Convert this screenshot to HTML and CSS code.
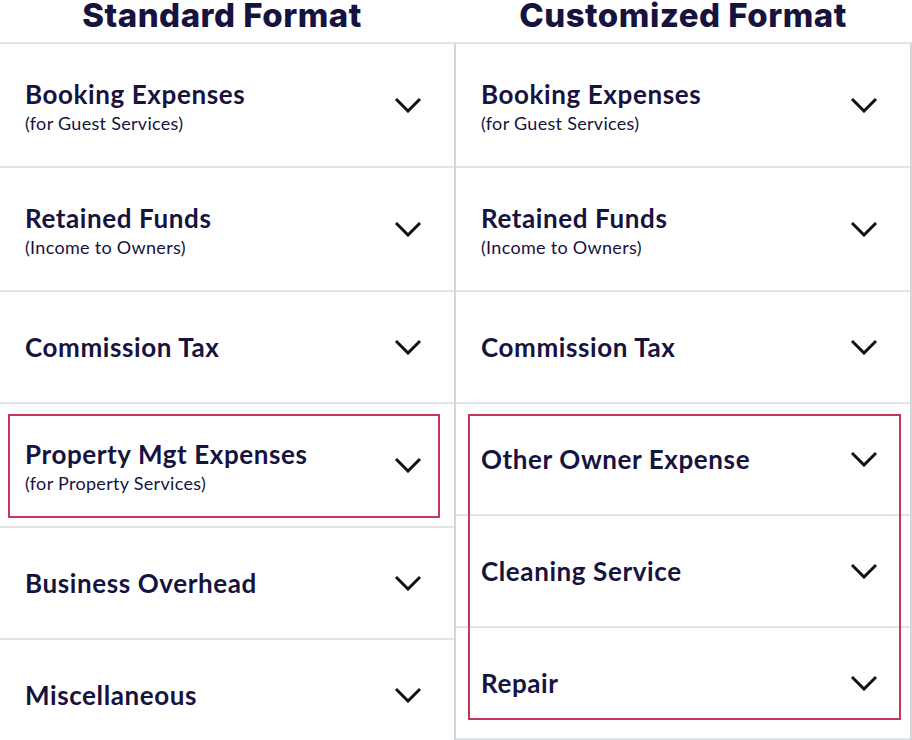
FILE: index.html
```html
<!DOCTYPE html>
<html lang="en">
<head>
<meta charset="utf-8">
<title>Standard vs Customized Format</title>
<link rel="stylesheet" href="styles.css">
</head>
<body>
<div class="board">
  <section class="col col-std">
    <h2 class="col-title">Standard Format</h2>
    <ul class="list">
      <li class="item tall"><div class="label"><span class="name">Booking Expenses</span><span class="sub">(for Guest Services)</span></div><svg class="chev" viewBox="0 0 28 16"><polyline points="2,2 14,14 26,2"/></svg></li>
      <li class="item tall"><div class="label"><span class="name">Retained Funds</span><span class="sub">(Income to Owners)</span></div><svg class="chev" viewBox="0 0 28 16"><polyline points="2,2 14,14 26,2"/></svg></li>
      <li class="item"><div class="label"><span class="name">Commission Tax</span></div><svg class="chev" viewBox="0 0 28 16"><polyline points="2,2 14,14 26,2"/></svg></li>
      <li class="item tall"><div class="label"><span class="name">Property Mgt Expenses</span><span class="sub">(for Property Services)</span></div><svg class="chev" viewBox="0 0 28 16"><polyline points="2,2 14,14 26,2"/></svg></li>
      <li class="item"><div class="label"><span class="name">Business Overhead</span></div><svg class="chev" viewBox="0 0 28 16"><polyline points="2,2 14,14 26,2"/></svg></li>
      <li class="item"><div class="label"><span class="name">Miscellaneous</span></div><svg class="chev" viewBox="0 0 28 16"><polyline points="2,2 14,14 26,2"/></svg></li>
    </ul>
  </section>
  <section class="col col-cus">
    <h2 class="col-title">Customized Format</h2>
    <ul class="list">
      <li class="item tall"><div class="label"><span class="name">Booking Expenses</span><span class="sub">(for Guest Services)</span></div><svg class="chev" viewBox="0 0 28 16"><polyline points="2,2 14,14 26,2"/></svg></li>
      <li class="item tall"><div class="label"><span class="name">Retained Funds</span><span class="sub">(Income to Owners)</span></div><svg class="chev" viewBox="0 0 28 16"><polyline points="2,2 14,14 26,2"/></svg></li>
      <li class="item"><div class="label"><span class="name">Commission Tax</span></div><svg class="chev" viewBox="0 0 28 16"><polyline points="2,2 14,14 26,2"/></svg></li>
      <li class="item"><div class="label"><span class="name">Other Owner Expense</span></div><svg class="chev" viewBox="0 0 28 16"><polyline points="2,2 14,14 26,2"/></svg></li>
      <li class="item"><div class="label"><span class="name">Cleaning Service</span></div><svg class="chev" viewBox="0 0 28 16"><polyline points="2,2 14,14 26,2"/></svg></li>
      <li class="item"><div class="label"><span class="name">Repair</span></div><svg class="chev" viewBox="0 0 28 16"><polyline points="2,2 14,14 26,2"/></svg></li>
    </ul>
  </section>
  <div class="mark mark-std"></div>
  <div class="mark mark-cus"></div>
</div>
</body>
</html>
```

FILE: styles.css
```css
html, body {
  margin: 0;
  padding: 0;
  background: #ffffff;
  overflow: hidden;
}

.board {
  position: relative;
  display: grid;
  grid-template-columns: 454px 458px;
  width: 912px;
  color: #17133f;
}

.col-title {
  height: 42px;
  margin: 0;
  text-align: center;
  font-family: "Inter", "Open Sans", sans-serif;
  font-weight: 800;
  font-size: 33px;
  line-height: 30px;
  letter-spacing: 0.5px;
  color: #17133f;
  box-sizing: border-box;
}

.col-std .col-title {
  padding-right: 10px;
}

.list {
  list-style: none;
  margin: 0;
  padding: 0;
  border-top: 2px solid #e1e5ea;
}

.col-cus .list {
  border-left: 2px solid #d3d6dc;
  border-right: 2px solid #d3d6dc;
}

.item {
  display: flex;
  align-items: center;
  justify-content: space-between;
  height: 110px;
  border-bottom: 2px solid #e1e5ea;
  padding: 0 32px 0 25px;
}

.item.tall {
  height: 122px;
}

.label {
  display: flex;
  flex-direction: column;
}

.tall .label {
  margin-top: 4px;
}

.name {
  font-family: "Lato", "Open Sans", sans-serif;
  font-weight: 700;
  font-size: 26px;
  line-height: 28px;
  letter-spacing: 0.6px;
  color: #17133f;
}

.sub {
  font-family: "Lato", "Open Sans", sans-serif;
  font-weight: 400;
  font-size: 18px;
  line-height: 24px;
  letter-spacing: 0.3px;
  margin-top: 3px;
  color: #17133f;
}

.chev {
  width: 28px;
  height: 16px;
  flex: none;
}

.chev polyline {
  fill: none;
  stroke: #111111;
  stroke-width: 3;
  stroke-linecap: butt;
  stroke-linejoin: miter;
}

.mark {
  position: absolute;
  border: 2px solid #c0395a;
  box-sizing: border-box;
}

.mark-std {
  left: 8px;
  top: 414px;
  width: 432px;
  height: 104px;
}

.mark-cus {
  left: 468px;
  top: 414px;
  width: 433px;
  height: 306px;
}
```
